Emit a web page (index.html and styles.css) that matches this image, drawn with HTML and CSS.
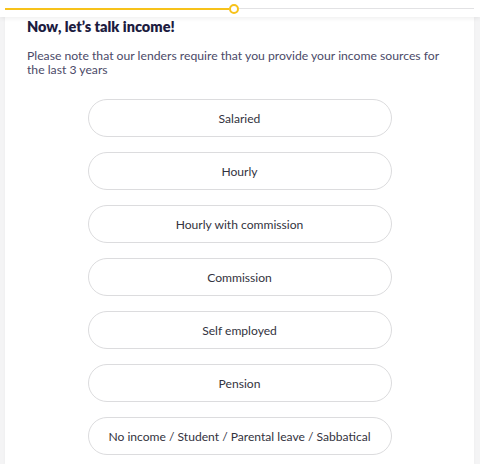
FILE: index.html
```html
<!DOCTYPE html>
<html>
<head>
<meta charset="utf-8">
<link rel="stylesheet" href="styles.css">
</head>
<body>
<div class="topbar">
  <div class="track">
    <div class="fill"></div>
    <div class="knob"></div>
    <div class="rest"></div>
  </div>
</div>
<main class="card">
  <h1 class="title">Now, let’s talk income!</h1>
  <p class="note">Please note that our lenders require that you provide your income sources for the last 3 years</p>
  <div class="options">
    <button class="option">Salaried</button>
    <button class="option">Hourly</button>
    <button class="option">Hourly with commission</button>
    <button class="option">Commission</button>
    <button class="option">Self employed</button>
    <button class="option">Pension</button>
    <button class="option">No income / Student / Parental leave / Sabbatical</button>
  </div>
</main>
</body>
</html>
```
FILE: styles.css
```css
html, body { margin: 0; padding: 0; }
body {
  background: #f4f4f5;
  font-family: "Lato", "Liberation Sans", sans-serif;
  width: 480px;
  height: 464px;
  overflow: hidden;
}
.topbar {
  position: relative;
  z-index: 2;
  height: 17px;
  background: #fff;
  box-shadow: 0 2px 4px rgba(0,0,0,0.06);
  padding: 0 6px 0 5px;
  display: flex;
  align-items: center;
}
.track {
  display: flex;
  align-items: center;
  width: 100%;
}
.fill {
  width: 224px;
  height: 2px;
  background: #f7c21a;
}
.knob {
  width: 6px;
  height: 6px;
  border: 2px solid #f7c21a;
  border-radius: 50%;
  background: #fff;
  flex: none;
}
.rest {
  flex: 1;
  height: 1px;
  background: #e2e2e4;
}
.card {
  margin: 0 6px 0 5px;
  background: #fff;
  height: 447px;
  padding: 0 22px;
  box-sizing: border-box;
  box-shadow: 0 0 3px rgba(0,0,0,0.04);
}
.title {
  margin: 0;
  padding-top: 1px;
  font-size: 14.5px;
  font-weight: 800;
  color: #1d1c3f;
  line-height: 18px;
}
.note {
  margin: 13px 0 0;
  font-size: 12.2px;
  line-height: 14px;
  color: #4b4a68;
}
.options {
  margin-top: 22px;
  display: flex;
  flex-direction: column;
  align-items: center;
  gap: 15px;
}
.option {
  width: 304px;
  height: 38px;
  border: 1px solid #dcdcde;
  border-radius: 19px;
  background: #fff;
  font-family: "Lato", "Liberation Sans", sans-serif;
  font-size: 12.1px;
  color: #333340;
  padding: 0;
}
```
